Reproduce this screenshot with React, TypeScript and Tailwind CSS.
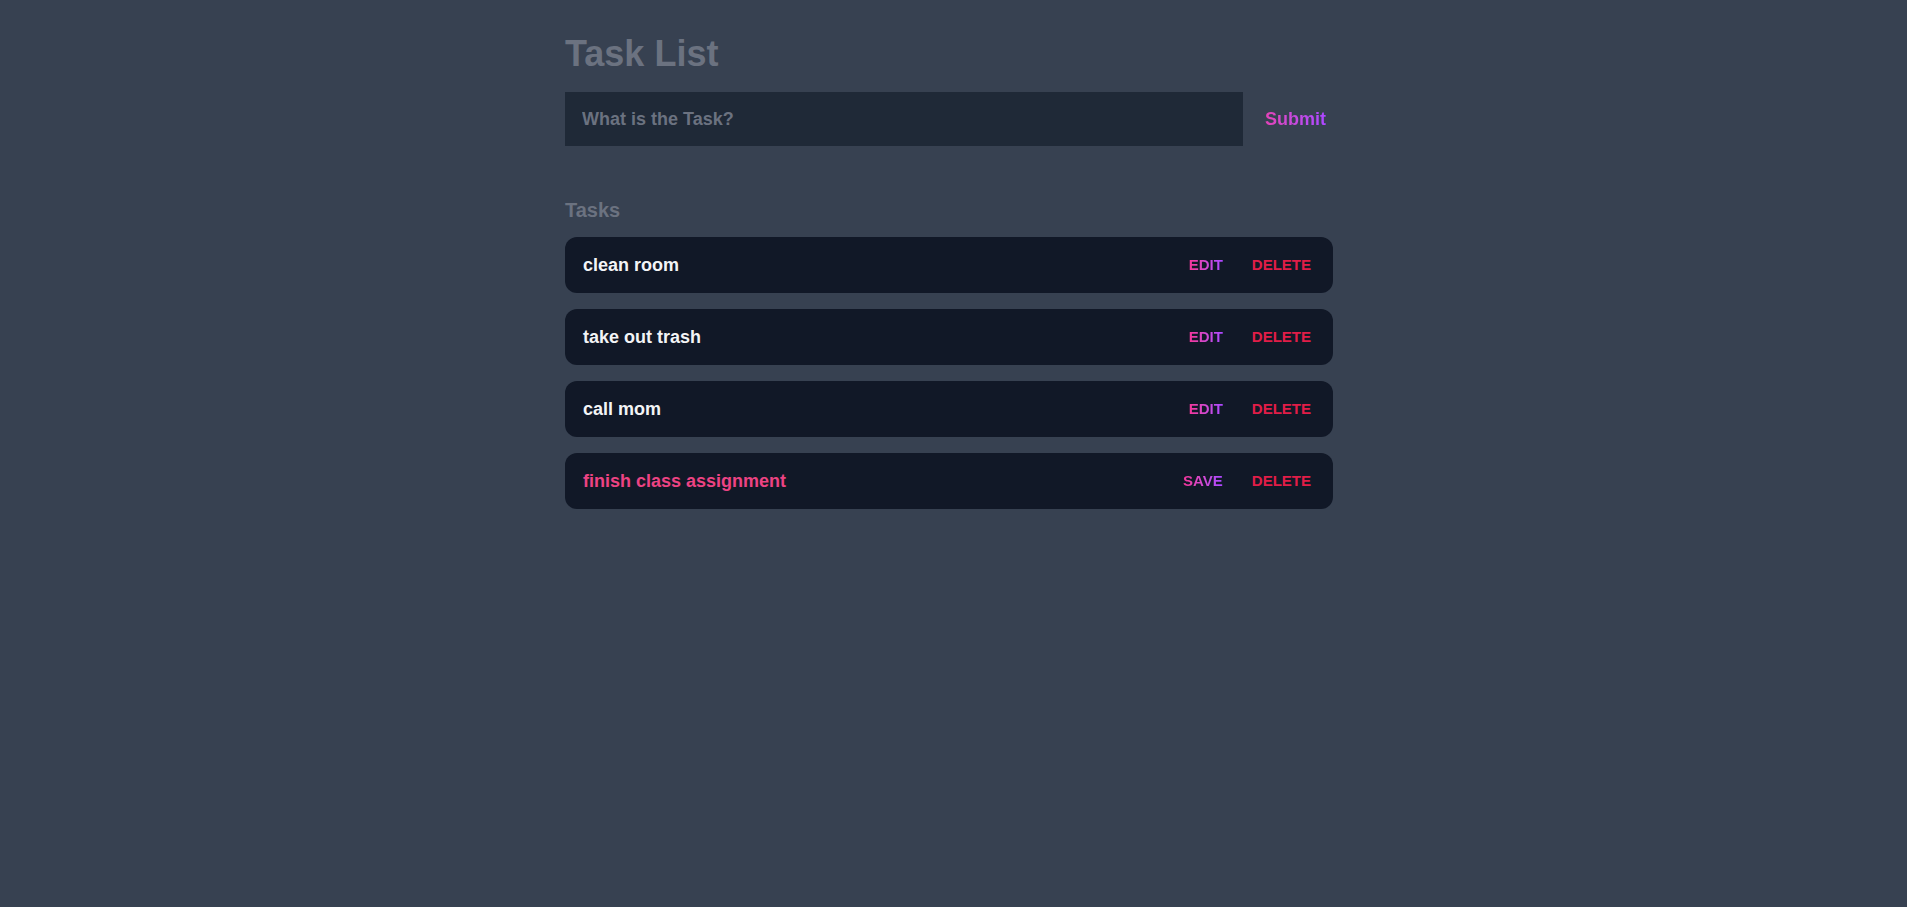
import { useState } from "react";

type Task = { id: number; text: string; editing: boolean };

const INITIAL: Task[] = [
  { id: 1, text: "clean room", editing: false },
  { id: 2, text: "take out trash", editing: false },
  { id: 3, text: "call mom", editing: false },
  { id: 4, text: "finish class assignment", editing: true },
];

export default function App() {
  const [tasks, setTasks] = useState<Task[]>(INITIAL);
  const [value, setValue] = useState("");

  const add = () => {
    if (!value.trim()) return;
    setTasks([...tasks, { id: Date.now(), text: value, editing: false }]);
    setValue("");
  };

  return (
    <div className="min-h-screen w-full bg-[#374151] font-['Liberation_Sans',Arial,sans-serif] font-bold">
      <div className="flex justify-center pr-[9px]">
        <div className="w-[768px] pt-[34px]">
          {/* Header */}
          <h1 className="text-4xl leading-10 font-bold text-[#6b7280]">Task List</h1>

          {/* New task form */}
          <form
            className="mt-[18px] flex items-center"
            onSubmit={(e) => {
              e.preventDefault();
              add();
            }}
          >
            <input
              value={value}
              onChange={(e) => setValue(e.target.value)}
              placeholder="What is the Task?"
              className="h-[54px] w-[678px] bg-[#1f2937] px-[17px] text-lg text-gray-100 placeholder:text-[#6b7280] outline-none"
            />
            <button
              type="submit"
              className="pl-[22px] text-lg font-bold bg-gradient-to-r from-pink-500 to-purple-500 bg-clip-text text-transparent"
            >
              Submit
            </button>
          </form>

          {/* Task list */}
          <h2 className="mt-[50px] text-xl leading-7 font-bold text-[#6b7280]">Tasks</h2>
          <ul className="mt-[13px] flex flex-col gap-4">
            {tasks.map((t) => (
              <li
                key={t.id}
                className="flex h-14 items-center justify-between rounded-xl bg-[#111827] pl-[18px] pr-[22px]"
              >
                <span
                  className={
                    t.editing
                      ? "text-lg text-[#ec4383]"
                      : "text-lg text-gray-100"
                  }
                >
                  {t.text}
                </span>
                <div className="flex items-center gap-[29px] text-[15px]">
                  <button
                    onClick={() =>
                      setTasks(tasks.map((x) => (x.id === t.id ? { ...x, editing: !x.editing } : x)))
                    }
                    className="font-bold uppercase bg-gradient-to-r from-pink-500 to-purple-500 bg-clip-text text-transparent"
                  >
                    {t.editing ? "Save" : "Edit"}
                  </button>
                  <button
                    onClick={() => setTasks(tasks.filter((x) => x.id !== t.id))}
                    className="font-bold uppercase text-[#e11d48]"
                  >
                    Delete
                  </button>
                </div>
              </li>
            ))}
          </ul>
        </div>
      </div>
    </div>
  );
}
